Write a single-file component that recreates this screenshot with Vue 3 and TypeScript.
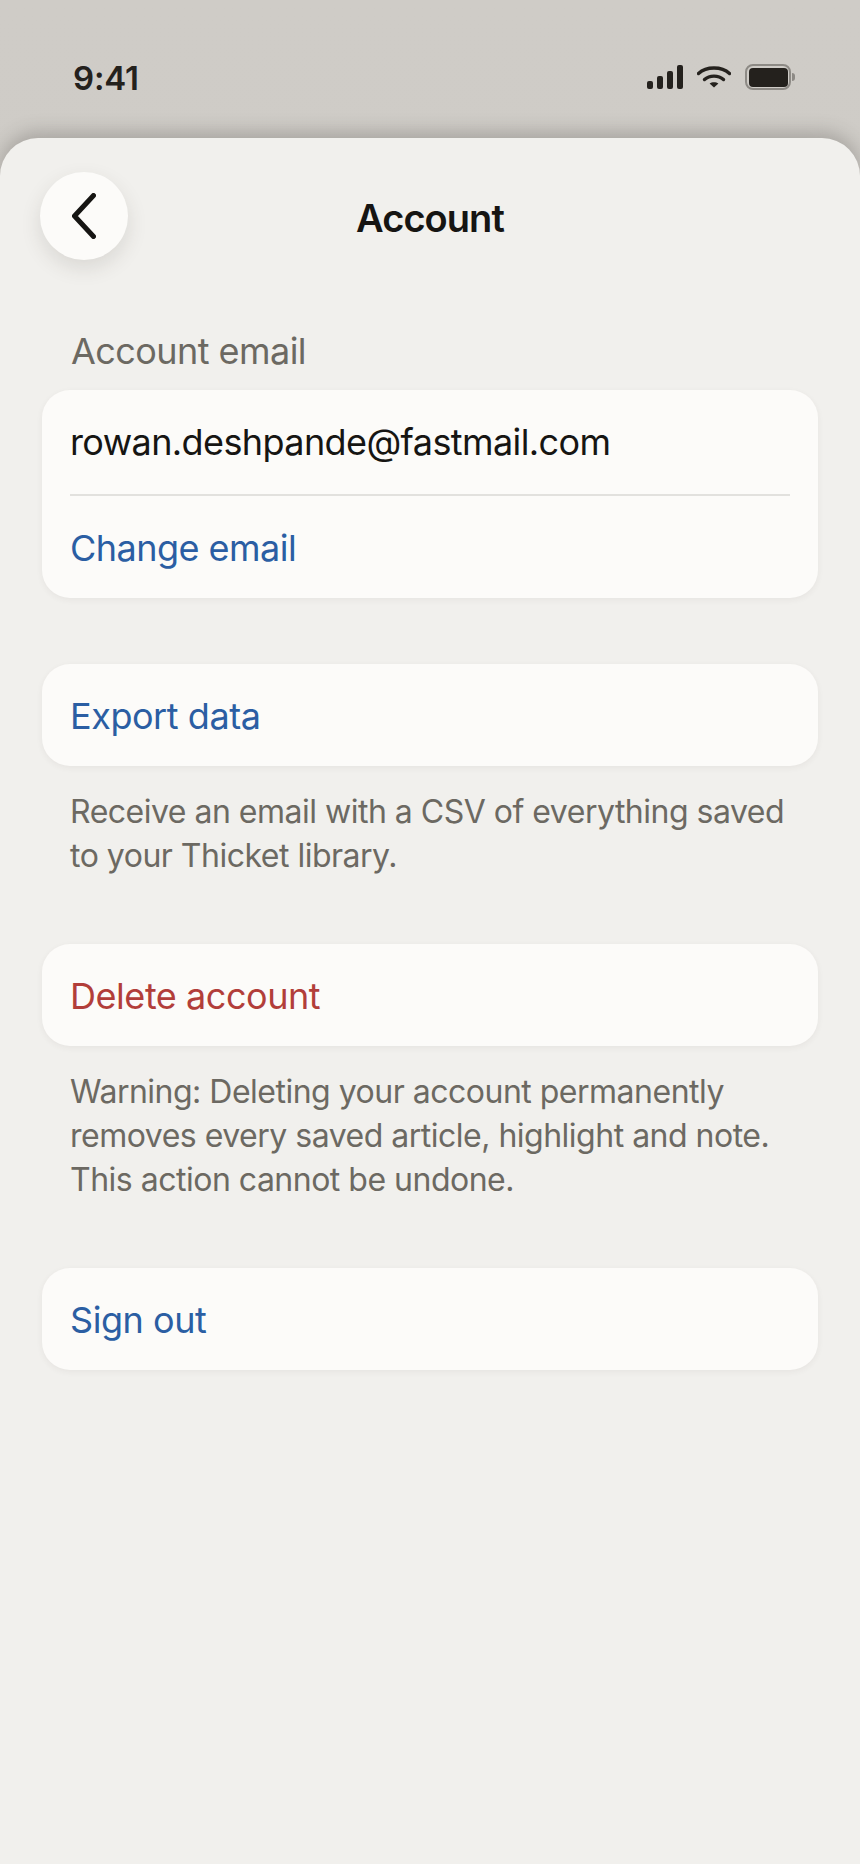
<template>
  <div class="screen">
    <div class="status-bar">
      <span class="time">9:41</span>
      <div class="status-icons">
        <svg class="signal" viewBox="0 0 36 24" width="36" height="24" fill="#24211d">
          <rect x="0" y="16" width="6" height="8" rx="2" />
          <rect x="10" y="11" width="6" height="13" rx="2" />
          <rect x="20" y="6" width="6" height="18" rx="2" />
          <rect x="30" y="0" width="6" height="24" rx="2" />
        </svg>
        <svg class="wifi" viewBox="0 0 34 22" width="34" height="22" fill="none" stroke="#24211d" stroke-width="3.4" stroke-linecap="round">
          <path d="M1.5 7.5C9.5 0.2 24.5 0.2 32.5 7.5" />
          <path d="M7.5 13.5C12.5 9 21.5 9 26.5 13.5" />
          <path d="M17 21.5 12.6 17.6C15 15.8 19 15.8 21.4 17.6Z" fill="#24211d" stroke="none" />
        </svg>
        <div class="battery">
          <div class="battery-body"><div class="battery-fill"></div></div>
          <div class="battery-cap"></div>
        </div>
      </div>
    </div>

    <div class="sheet">
      <header class="nav">
        <button class="back" aria-label="Back">
          <svg viewBox="0 0 24 46" width="24" height="46" fill="none" stroke="#161513" stroke-width="5" stroke-linecap="round" stroke-linejoin="round">
            <path d="M21.5 2.5 2.5 23l19 20.5" />
          </svg>
        </button>
        <h1 class="title">Account</h1>
      </header>

      <div class="content">
        <section class="group">
          <div class="label">Account email</div>
          <div class="card">
            <div class="row row-email">{{ email }}</div>
            <div class="divider"></div>
            <div class="row link row-change">Change email</div>
          </div>
        </section>

        <section v-for="item in actions" :key="item.label" class="group">
          <div class="card">
            <div class="row single" :class="item.danger ? 'danger' : 'link'">{{ item.label }}</div>
          </div>
          <p v-if="item.note" class="note" v-html="item.note"></p>
        </section>
      </div>
    </div>
  </div>
</template>

<script setup lang="ts">
interface ActionItem {
  label: string
  note?: string
  danger?: boolean
}

const email = 'rowan.deshpande@fastmail.com'

const actions: ActionItem[] = [
  {
    label: 'Export data',
    note: 'Receive an email with a CSV of everything saved<br>to your Thicket library.',
  },
  {
    label: 'Delete account',
    danger: true,
    note: 'Warning: Deleting your account permanently<br>removes every saved article, highlight and note.<br>This action cannot be undone.',
  },
  { label: 'Sign out' },
]
</script>

<style>
html,
body {
  margin: 0;
  background: #f1f0ed;
}
</style>

<style scoped>
.screen {
  width: 860px;
  height: 1864px;
  overflow: hidden;
  display: flex;
  flex-direction: column;
  background: linear-gradient(180deg, #cfccc7 0%, #cdcac5 70%, #c3c0bb 100%);
  font-family: Inter, "Liberation Sans", sans-serif;
}

.status-bar {
  height: 138px;
  flex-shrink: 0;
  box-sizing: border-box;
  padding: 58px 65px 0 73px;
  display: flex;
  justify-content: space-between;
  align-items: flex-start;
}

.time {
  font-size: 33px;
  line-height: 40px;
  font-weight: 600;
  letter-spacing: -0.2px;
  color: #24211d;
}

.status-icons {
  display: flex;
  align-items: center;
  gap: 14px;
  margin-top: 6px;
}

.battery {
  display: flex;
  align-items: center;
  gap: 1px;
}

.battery-body {
  width: 46px;
  height: 26px;
  box-sizing: border-box;
  border: 2.5px solid #8d8a85;
  border-radius: 8px;
  padding: 1.5px;
}

.battery-fill {
  height: 100%;
  background: #24211d;
  border-radius: 4px;
}

.battery-cap {
  width: 3px;
  height: 8px;
  background: #8d8a85;
  border-radius: 0 3px 3px 0;
}

.sheet {
  flex: 1;
  background: #f1f0ed;
  border-radius: 38px 38px 0 0;
  box-shadow: 0 -6px 18px rgba(70, 66, 60, 0.28);
  padding: 34px 42px 0 40px;
}

.nav {
  height: 88px;
  display: flex;
  align-items: center;
  justify-content: center;
  position: relative;
}

.back {
  position: absolute;
  left: 0;
  top: 0;
  width: 88px;
  height: 88px;
  padding: 0;
  border: none;
  border-radius: 50%;
  background: #fcfbf9;
  box-shadow: 0 8px 20px rgba(60, 55, 50, 0.13);
  display: flex;
  align-items: center;
  justify-content: center;
}

.title {
  margin: 0 0 -4px 2px;
  font-size: 38px;
  font-weight: 600;
  letter-spacing: -0.95px;
  color: #161513;
}

.content {
  margin-top: 69px;
  margin-left: 2px;
  display: flex;
  flex-direction: column;
}

.group {
  margin-bottom: 66px;
}

.label {
  padding-left: 29px;
  font-size: 36px;
  line-height: 44px;
  letter-spacing: -0.55px;
  color: #6c6962;
  margin-bottom: 17px;
}

.card {
  background: #fcfbf9;
  border-radius: 28px;
  box-shadow: 0 2px 6px rgba(60, 55, 50, 0.06);
  padding: 0 28px;
}

.row {
  font-size: 36px;
  line-height: 44px;
  letter-spacing: -0.45px;
}

.row-email {
  padding: 30px 0 0;
  height: 104px;
  box-sizing: border-box;
  color: #161513;
  letter-spacing: -0.6px;
}

.row-change {
  padding: 30px 0 28px;
  letter-spacing: -0.52px;
}

.single {
  padding: 30px 0 28px;
}

.divider {
  height: 2px;
  background: #e2e1de;
}

.link {
  color: #2b5ea3;
}

.danger {
  color: #b23e3a;
}

.note {
  margin: 24px 0 0;
  padding: 0 28px;
  font-size: 32px;
  line-height: 44px;
  letter-spacing: -0.5px;
  color: #6c6962;
}
</style>
